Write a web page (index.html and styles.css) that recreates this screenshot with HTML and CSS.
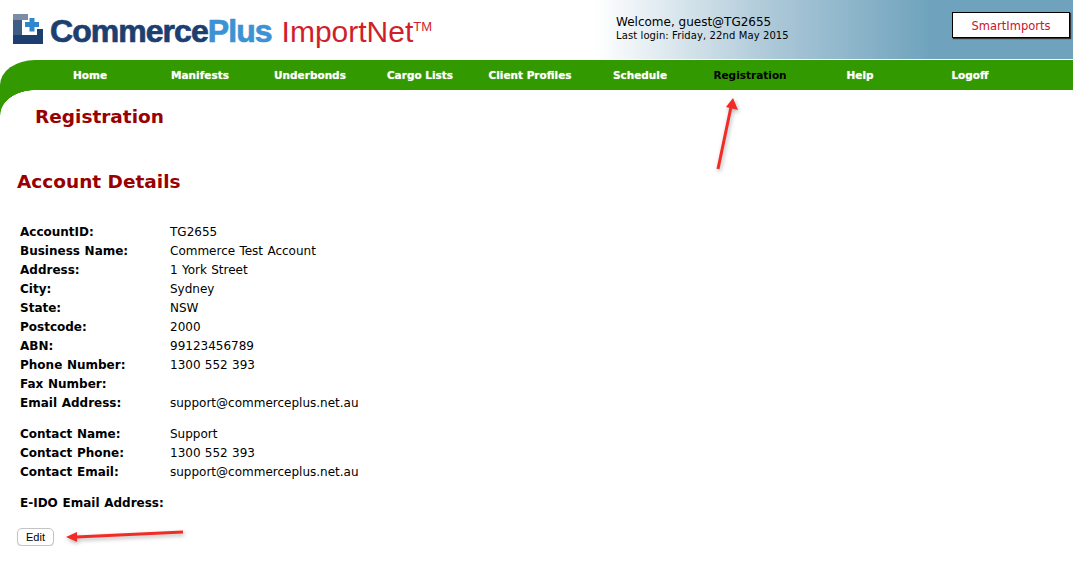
FILE: index.html
```html
<!DOCTYPE html>
<html lang="en">
  <head>
    <meta charset="UTF-8" />
    <title>Registration</title>
    <link rel="stylesheet" href="styles.css">
  </head>
  <body>
    <div class="header">
      <div class="logo">
        <svg class="logo-icon" width="30" height="30" viewBox="0 0 30 30">
          <path d="M0 0H15V6H9V21H24V15H30V30H0Z" fill="#1d3f70" />
          <rect x="0" y="0" width="15" height="6" fill="#7c8ca6" />
          <rect x="0" y="6" width="9" height="15" fill="#3f5c87" />
          <path d="M16.500 4H21.500V8H26V13H21.500V17.500H16.500V13H12V8H16.500Z" fill="#2f86cc" />
        </svg>
        <span class="logo-commerce">Commerce</span><span class="logo-plus">Plus</span>
        <span class="logo-import">ImportNet<sup>TM</sup></span>
      </div>
      <div class="welcome">
        <div class="welcome-name">Welcome, guest@TG2655</div>
        <div class="welcome-login">Last login: Friday, 22nd May 2015</div>
      </div>
      <a class="smart-btn">SmartImports</a>
    </div>

    <div class="nav">
      <a>Home</a>
      <a>Manifests</a>
      <a>Underbonds</a>
      <a>Cargo Lists</a>
      <a>Client Profiles</a>
      <a>Schedule</a>
      <a class="current">Registration</a>
      <a>Help</a>
      <a>Logoff</a>
    </div>

    <div class="title-row">
      <h1>Registration</h1>
    </div>

    <div class="content">
      <h2>Account Details</h2>

      <div class="details">
        <div class="row"><b>AccountID:</b><span>TG2655</span></div>
        <div class="row"><b>Business Name:</b><span>Commerce Test Account</span></div>
        <div class="row"><b>Address:</b><span>1 York Street</span></div>
        <div class="row"><b>City:</b><span>Sydney</span></div>
        <div class="row"><b>State:</b><span>NSW</span></div>
        <div class="row"><b>Postcode:</b><span>2000</span></div>
        <div class="row"><b>ABN:</b><span>99123456789</span></div>
        <div class="row"><b>Phone Number:</b><span>1300 552 393</span></div>
        <div class="row"><b>Fax Number:</b><span></span></div>
        <div class="row"><b>Email Address:</b><span>support@commerceplus.net.au</span></div>
      </div>

      <div class="details">
        <div class="row"><b>Contact Name:</b><span>Support</span></div>
        <div class="row"><b>Contact Phone:</b><span>1300 552 393</span></div>
        <div class="row"><b>Contact Email:</b><span>support@commerceplus.net.au</span></div>
      </div>

      <div class="details">
        <div class="row"><b>E-IDO Email Address:</b><span></span></div>
      </div>

      <button class="edit-btn">Edit</button>
    </div>

    <!-- red arrows drawn over the page -->
    <svg class="arrow arrow-up" width="40" height="80" viewBox="0 0 40 80">
      <path d="M4 71L17 9" stroke="#f22b26" stroke-width="3" fill="none" />
      <path d="M19 0L24 12L12 9Z" fill="#f22b26" />
    </svg>
    <svg class="arrow arrow-left" width="130" height="24" viewBox="0 0 130 24">
      <path d="M12 11L119 6" stroke="#f22b26" stroke-width="3" fill="none" />
      <path d="M2 11L13 6V16Z" fill="#f22b26" />
    </svg>
  </body>
</html>
```

FILE: styles.css
```css
* {
  box-sizing: border-box;
}

body {
  margin: 0;
  background: #fff;
  font-family: "DejaVu Sans", Verdana, sans-serif;
  font-size: 12px;
  color: #000;
}

.header {
  display: flex;
  align-items: flex-start;
  height: 59px;
  margin-bottom: 1px;
  background: linear-gradient(to right, #fff 595px, #a9c6d6 780px, #6fa3bd 930px);
}

.logo {
  display: flex;
  align-items: baseline;
  width: 616px;
  padding: 13px 0 0 13px;
  white-space: nowrap;
}

.logo-icon {
  align-self: flex-start;
  margin: 1px 7px 0 0;
}

.logo-commerce,
.logo-plus {
  font-family: "Liberation Sans", Arial, sans-serif;
  font-weight: bold;
  font-size: 32px;
  letter-spacing: -0.95px;
  -webkit-text-stroke: 0.7px currentColor;
  color: #1d3f70;
}

.logo-plus {
  color: #3d92d3;
}

.logo-import {
  margin-left: 10px;
  font-family: "Liberation Sans", Arial, sans-serif;
  font-size: 30px;
  color: #cf1f2b;
}

.logo-import sup {
  font-size: 13px;
  vertical-align: 11px;
  line-height: 0;
}

.welcome {
  width: 336px;
  padding-top: 15px;
}

.welcome-name {
  font-size: 12px;
  line-height: 14px;
}

.welcome-login {
  font-size: 10px;
  line-height: 13px;
  letter-spacing: 0.1px;
}

.smart-btn {
  width: 118px;
  height: 26px;
  margin-top: 12px;
  border: 1px solid #000;
  box-shadow: 1px 1px 1px #333;
  background: #fff;
  color: #d0112b;
  font-size: 11.5px;
  line-height: 26px;
  text-align: center;
}

.nav {
  display: flex;
  height: 30px;
  padding-left: 35px;
  background: #339900;
  border-top-left-radius: 35px 25px;
}

.nav a {
  width: 110px;
  color: #fff;
  font-size: 10.5px;
  font-weight: bold;
  line-height: 30px;
  text-align: center;
  text-shadow: 0 0 1px rgba(255, 255, 255, 0.6);
}

.nav a.current {
  color: #000;
  text-shadow: none;
}

.title-row {
  position: relative;
  height: 80px;
  padding: 15px 0 0 35px;
}

/* tail of the green band, curving down the left edge */
.title-row::before {
  content: "";
  position: absolute;
  left: 0;
  top: 0;
  width: 35px;
  height: 25px;
  background: radial-gradient(ellipse 35px 25px at 100% 100%, #fff 98%, #339900 100%);
}

h1 {
  margin: 0;
  color: #990000;
  font-size: 18.500px;
  line-height: 24px;
}

.content {
  padding: 0 17px;
}

h2 {
  margin: 0 0 29px;
  color: #990000;
  font-size: 18.500px;
  line-height: 24px;
}

.details {
  padding-left: 3px;
  margin-bottom: 12px;
}

.row {
  display: flex;
  height: 19px;
  font-size: 12px;
  line-height: 19px;
  word-spacing: 0.5px;
}

.row b {
  width: 150px;
  flex: none;
  white-space: nowrap;
}

.edit-btn {
  display: block;
  width: 37px;
  height: 18px;
  margin-top: 15px;
  padding: 0;
  border: 1px solid #c4c4c4;
  border-radius: 5px;
  background: #fff;
  box-shadow: 0 1px 1px #ddd;
  font-family: "Liberation Sans", Arial, sans-serif;
  font-size: 11px;
  color: #000;
}

.arrow {
  position: absolute;
  filter: drop-shadow(1px 2px 2px rgba(0, 0, 0, 0.3));
}

.arrow-up {
  left: 714px;
  top: 98px;
}

.arrow-left {
  left: 64px;
  top: 526px;
}
```
